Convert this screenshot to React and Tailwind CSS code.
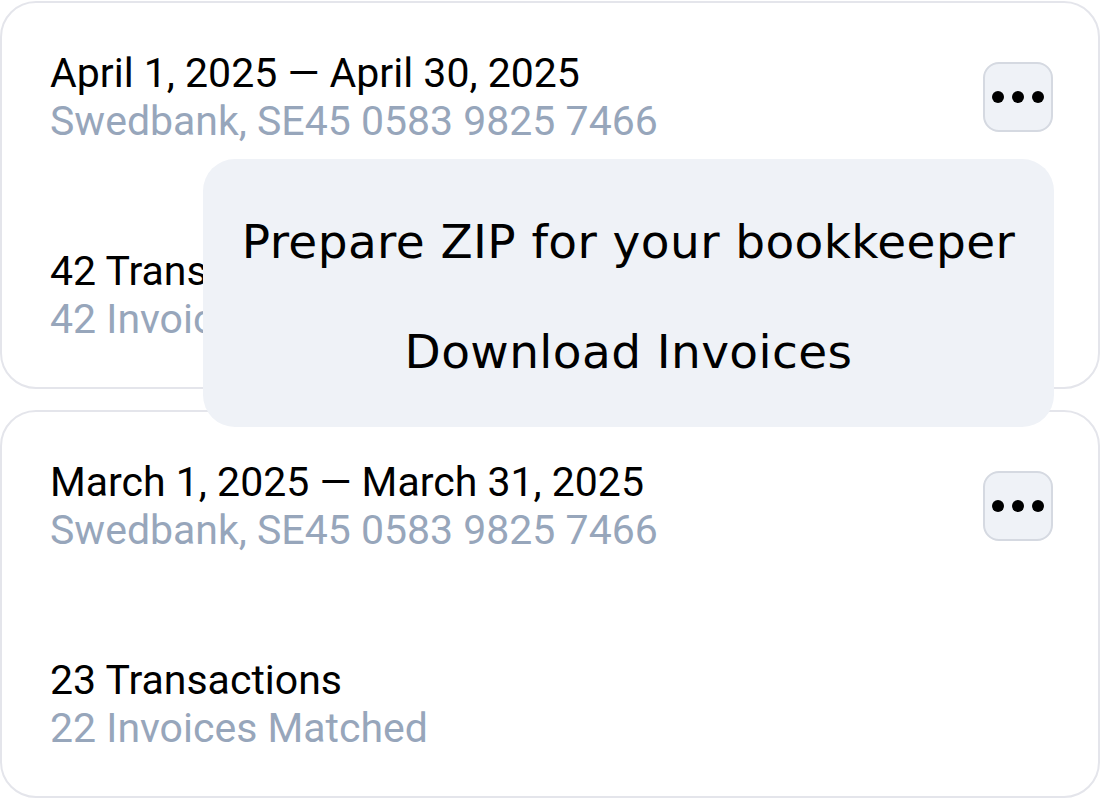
import React from "react";

function MoreButton() {
  return (
    <button className="mt-[13px] flex h-[70px] w-[70px] shrink-0 items-center justify-center gap-[8px] rounded-[16px] border-2 border-[#d5d9e1] bg-[#eff2f7]">
      <span className="h-[12px] w-[12px] rounded-full bg-black" />
      <span className="h-[12px] w-[12px] rounded-full bg-black" />
      <span className="h-[12px] w-[12px] rounded-full bg-black" />
    </button>
  );
}

function StatementCard({ title, bank, transactions, matched }) {
  return (
    <div className="flex h-[388px] flex-col justify-between rounded-[36px] border-2 border-[#e4e5eb] bg-white pb-[44px] pl-[48px] pr-[45px] pt-[46px]">
      <div className="flex items-start justify-between">
        <div className="flex flex-col">
          <div className="text-[41px] leading-[48px] text-black">{title}</div>
          <div className="text-[41px] leading-[48px] text-[#97a6bb]">{bank}</div>
        </div>
        <MoreButton />
      </div>
      <div className="flex flex-col">
        <div className="text-[41px] leading-[48px] text-black">{transactions}</div>
        <div className="text-[41px] leading-[48px] text-[#97a6bb]">{matched}</div>
      </div>
    </div>
  );
}

export default function App() {
  return (
    <div className="relative h-[800px] w-[1100px] overflow-hidden bg-white pt-px font-['Roboto',sans-serif]">
      <div className="flex flex-col gap-[21px]">
        <StatementCard
          title="April 1, 2025 — April 30, 2025"
          bank="Swedbank, SE45 0583 9825 7466"
          transactions="42 Transactions"
          matched="42 Invoices Matched"
        />
        <StatementCard
          title="March 1, 2025 — March 31, 2025"
          bank="Swedbank, SE45 0583 9825 7466"
          transactions="23 Transactions"
          matched="22 Invoices Matched"
        />
      </div>
      <div className="absolute left-[203px] top-[159px] flex w-[851px] flex-col rounded-[32px] bg-[#eff2f7] pb-[20px] pt-[28px] font-['DejaVu_Sans',sans-serif]">
        <div className="flex h-[110px] items-center justify-center text-[47px] tracking-[0.4px] text-black">
          Prepare ZIP for your bookkeeper
        </div>
        <div className="flex h-[110px] items-center justify-center text-[47px] tracking-[0.4px] text-black">
          Download Invoices
        </div>
      </div>
    </div>
  );
}
